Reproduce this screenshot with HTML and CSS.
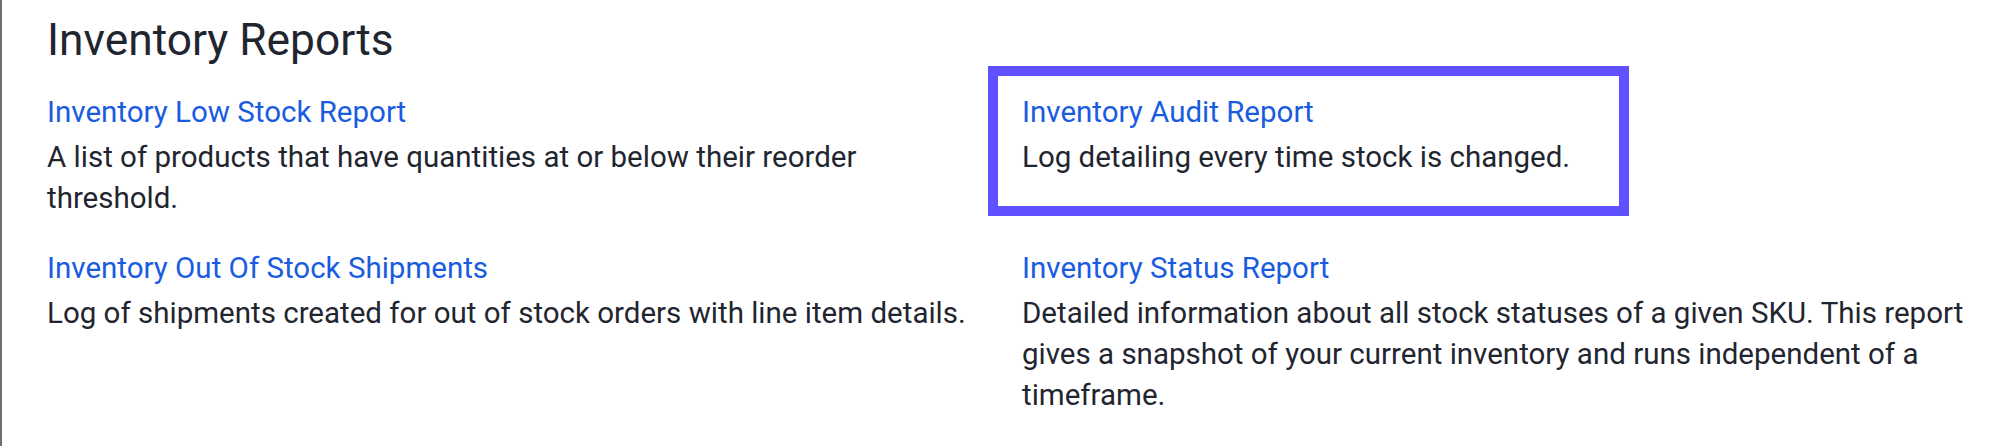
FILE: index.html
```html
<!DOCTYPE html>
<html>
<head>
<meta charset="utf-8">
<link rel="stylesheet" href="styles.css">
</head>
<body>
<main class="page">
  <h1 class="title">Inventory Reports</h1>
  <div class="grid">
    <div class="item">
      <a class="link" href="#">Inventory Low Stock Report</a>
      <p class="desc">A list of products that have quantities at or below their reorder threshold.</p>
    </div>
    <div class="item highlighted">
      <a class="link" href="#">Inventory Audit Report</a>
      <p class="desc">Log detailing every time stock is changed.</p>
    </div>
    <div class="item">
      <a class="link" href="#">Inventory Out Of Stock Shipments</a>
      <p class="desc">Log of shipments created for out of stock orders with line item details.</p>
    </div>
    <div class="item">
      <a class="link" href="#">Inventory Status Report</a>
      <p class="desc">Detailed information about all stock statuses of a given SKU. This report gives a snapshot of your current inventory and runs independent of a timeframe.</p>
    </div>
  </div>
</main>
</body>
</html>
```

FILE: styles.css
```css
html, body {
  margin: 0;
  padding: 0;
  background: #ffffff;
}
body {
  font-family: Roboto, "Liberation Sans", sans-serif;
  color: #1f2630;
  width: 1998px;
  height: 446px;
  overflow: hidden;
}
.page {
  box-sizing: border-box;
  height: 446px;
  border-left: 2px solid #6f6f6f;
  padding: 14px 0 0 45px;
}
.title {
  margin: 0 0 26px 0;
  font-weight: 400;
  font-size: 44.3px;
  line-height: 52px;
  color: #1f2630;
}
.grid {
  display: grid;
  grid-template-columns: 932px 960px;
  column-gap: 43px;
  row-gap: 29px;
}
.item {
  position: relative;
}
.link {
  display: block;
  font-size: 29.5px;
  line-height: 41px;
  color: #1a5ce0;
  text-decoration: none;
  margin-bottom: 4px;
}
.desc {
  margin: 0;
  font-size: 29.5px;
  line-height: 41px;
  color: #1f2630;
}
.highlighted::after {
  content: "";
  position: absolute;
  left: -34px;
  top: -26px;
  width: 641px;
  height: 150px;
  box-sizing: border-box;
  border: 10px solid #5f51ff;
}
```
